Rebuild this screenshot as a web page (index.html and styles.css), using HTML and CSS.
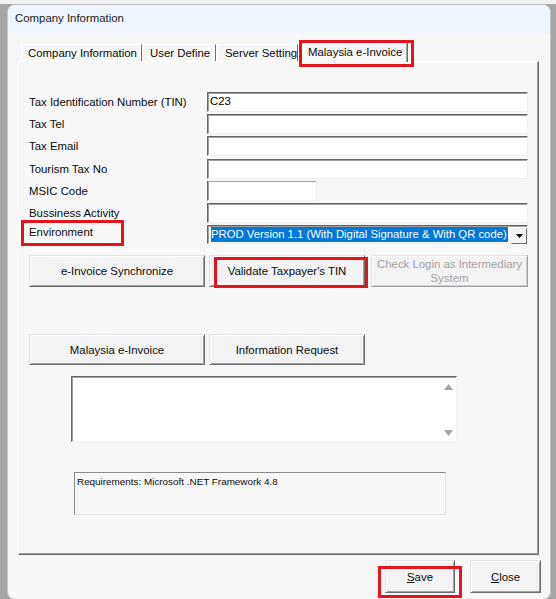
FILE: index.html
```html
<!DOCTYPE html>
<html>
<head>
<meta charset="utf-8">
<link rel="stylesheet" href="styles.css">
</head>
<body>
<div class="window">
  <div class="titlebar">Company Information</div>
  <div class="client">
    <div class="tabs">
      <div class="tab t1">Company Information</div>
      <div class="tab t2">User Define</div>
      <div class="tab t3">Server Setting</div>
      <div class="tab t4 active">Malaysia e-Invoice<span class="hl hl-tab"></span></div>
    </div>
    <div class="panel">
      <div class="form">
        <div class="lbl">Tax Identification Number (TIN)</div>
        <div class="inp">C23</div>
        <div class="lbl">Tax Tel</div>
        <div class="inp"></div>
        <div class="lbl">Tax Email</div>
        <div class="inp"></div>
        <div class="lbl">Tourism Tax No</div>
        <div class="inp"></div>
        <div class="lbl">MSIC Code</div>
        <div class="inp msic"></div>
        <div class="lbl">Bussiness Activity</div>
        <div class="inp"></div>
        <div class="lbl env">Environment<span class="hl hl-env"></span></div>
        <div class="combo">
          <span class="sel">PROD Version 1.1 (With Digital Signature &amp; With QR code)</span>
          <span class="drop"><svg width="7" height="4" viewBox="0 0 7 4"><path d="M0 0h7L3.5 4z" fill="#000"/></svg></span>
        </div>
      </div>
      <div class="btnrow r1">
        <div class="btn b-sync">e-Invoice Synchronize</div>
        <div class="btn b-val">Validate Taxpayer's TIN<span class="hl hl-val"></span></div>
        <div class="btn b-chk disabled">Check Login as Intermediary<br>System</div>
      </div>
      <div class="btnrow r2">
        <div class="btn b-sync">Malaysia e-Invoice</div>
        <div class="btn b-val">Information Request</div>
      </div>
      <div class="memo">
        <div class="scroll">
          <svg width="9" height="6" viewBox="0 0 9 6"><path d="M0 6L4.5 0L9 6z" fill="#a3a3a3"/></svg>
          <svg width="9" height="6" viewBox="0 0 9 6"><path d="M0 0h9L4.5 6z" fill="#a3a3a3"/></svg>
        </div>
      </div>
      <div class="req">Requirements: Microsoft .NET Framework 4.8</div>
    </div>
    <div class="footer">
      <div class="btn fbtn save"><span><u>S</u>ave</span><span class="hl hl-save"></span></div>
      <div class="btn fbtn close"><span><u>C</u>lose</span></div>
    </div>
  </div>
</div>
</body>
</html>
```
FILE: styles.css
```css
html, body {
  margin: 0;
  height: 100%;
}
body {
  background: linear-gradient(#f1f1f1 0, #f1f1f1 4px, #a6a6a6 4px);
  font-family: "Liberation Sans", Arial, sans-serif;
  font-size: 11.4px;
  color: #000;
  overflow: hidden;
}
.window {
  margin: 4px 0 0 7px;
  width: 544px;
  height: 596px;
  box-sizing: border-box;
  border: 1px solid #c4c4c4;
  border-radius: 8px;
  background: #f7f7f7;
  overflow: hidden;
}
.titlebar {
  height: 29px;
  box-sizing: border-box;
  background: #eef5fc;
  padding: 0 0 3px 7px;
  display: flex;
  align-items: center;
  color: #1b1b1b;
}
.client {
  padding-left: 10px;
  padding-right: 10px;
}
.tabs {
  height: 27px;
  display: flex;
  align-items: flex-end;
  padding-left: 3px;
}
.tab {
  position: relative;
  box-sizing: border-box;
  height: 17px;
  padding-left: 6px;
  padding-top: 1px;
  line-height: 15px;
  white-space: nowrap;
  border-left: 1px solid #ffffff;
  border-top: 1px solid #ffffff;
  border-right: 1px solid #6d6d6d;
  color: #0a0a0a;
}
.t1 { width: 121px; }
.t2 { width: 74px; padding-left: 7px; }
.t3 { width: 82px; padding-left: 8px; }
.t4 { width: 110px; }
.tab.active {
  height: 20px;
  margin-bottom: -1px;
  background: #f7f7f7;
  padding-left: 9px;
  padding-top: 2px;
  box-shadow: inset -1px 0 #a0a0a0;
  z-index: 2;
}
.hl {
  position: absolute;
  box-sizing: border-box;
  border: 3px solid #e4141c;
  pointer-events: none;
  z-index: 5;
}
.hl-tab { left: 0; top: -3px; width: 115px; height: 27px; }
.hl-env { left: -8px; top: -5px; width: 103px; height: 26px; }
.hl-val { left: 4px; top: 1px; width: 154px; height: 31px; }
.hl-save { left: -8px; top: 5px; width: 84px; height: 32px; }

.panel {
  box-sizing: border-box;
  width: 521px;
  height: 494px;
  border-left: 1px solid #ffffff;
  border-top: 1px solid #ffffff;
  border-right: 1px solid #696969;
  border-bottom: 1px solid #696969;
  box-shadow: inset -1px -1px #a0a0a0;
  padding: 30px 0 0 10px;
  display: flex;
  flex-direction: column;
  align-items: flex-start;
}
.form {
  display: grid;
  grid-template-columns: 178px 321px;
  grid-auto-rows: 20px;
  row-gap: 2.2px;
}
.lbl {
  position: relative;
  display: flex;
  align-items: center;
  white-space: nowrap;
  color: #0a0a0a;
}
.lbl.env { align-items: flex-start; padding-top: 1px; }
.inp {
  box-sizing: border-box;
  background: #fff;
  border-top: 1px solid #646464;
  border-left: 1px solid #646464;
  border-right: 1px solid #f0f0f0;
  border-bottom: 1px solid #f0f0f0;
  box-shadow: inset 1px 1px #a0a0a0;
  padding: 1px 0 0 2px;
  line-height: 15px;
}
.inp.msic {
  width: 110px;
  border-top: 0;
  padding-top: 2px;
  background:
    linear-gradient(to right, transparent 36px, #646464 36px) top left / 100% 1px no-repeat,
    #fff;
}
.combo {
  box-sizing: border-box;
  height: 19px;
  background: #fff;
  border-top: 1px solid #646464;
  border-left: 1px solid #646464;
  border-right: 1px solid #f0f0f0;
  border-bottom: 1px solid #f0f0f0;
  box-shadow: inset 1px 1px #a0a0a0;
  display: flex;
  align-items: center;
  padding-left: 3px;
}
.sel {
  width: 297px;
  height: 15px;
  line-height: 15px;
  background: #0078d7;
  color: #fff;
  white-space: nowrap;
  overflow: hidden;
  font-size: 11.3px;
}
.drop {
  box-sizing: border-box;
  margin-left: 3px;
  width: 16px;
  height: 16px;
  margin-top: 2px;
  background: #f3f3f3;
  border: 1px solid;
  border-color: #f0f0f0 #6d6d6d #6d6d6d #f0f0f0;
  display: flex;
  align-items: center;
  justify-content: center;
}
.btnrow {
  display: flex;
}
.btnrow.r1 { margin-top: 10px; height: 32px; }
.btnrow.r2 { margin-top: 47px; height: 31px; }
.btn {
  position: relative;
  box-sizing: border-box;
  background: #f3f3f3;
  border: 1px solid;
  border-color: #e3e3e3 #6d6d6d #6d6d6d #e3e3e3;
  box-shadow: inset 1px 1px #ffffff, inset -1px -1px #a0a0a0;
  display: flex;
  align-items: center;
  justify-content: center;
  text-align: center;
  color: #0a0a0a;
  white-space: nowrap;
}
.b-sync { width: 176px; }
.b-val { width: 156px; margin-left: 4px; }
.b-chk { width: 157px; margin-left: 6px; }
.btn.disabled {
  color: #a2a2a2;
  line-height: 14px;
  border-color: #e3e3e3 #a0a0a0 #a0a0a0 #e3e3e3;
  box-shadow: inset 1px 1px #ffffff, inset -1px -1px #d0d0d0;
}
.memo {
  margin-top: 11px;
  margin-left: 42px;
  width: 386px;
  height: 66px;
  box-sizing: border-box;
  background: #fff;
  border-top: 1px solid #646464;
  border-left: 1px solid #646464;
  border-right: 1px solid #f0f0f0;
  border-bottom: 1px solid #f0f0f0;
  box-shadow: inset 1px 1px #a0a0a0;
  display: flex;
  justify-content: flex-end;
}
.scroll {
  width: 16px;
  padding: 7px 0 5px;
  display: flex;
  flex-direction: column;
  justify-content: space-between;
  align-items: center;
}
.scroll svg { display: block; }
.req {
  margin-top: 30px;
  margin-left: 45px;
  width: 372px;
  height: 43px;
  box-sizing: border-box;
  border-top: 1px solid #8a8a8a;
  border-left: 1px solid #8a8a8a;
  border-right: 1px solid #e3e3e3;
  border-bottom: 1px solid #e3e3e3;
  padding: 2px 0 0 2px;
  font-size: 9.9px;
  color: #0a0a0a;
  line-height: 13px;
}
.footer {
  display: flex;
  justify-content: flex-end;
  gap: 15px;
  padding-top: 5px;
  margin-right: -1px;
}
.fbtn { height: 33px; }
.save { width: 70px; }
.close { width: 71px; }
```
